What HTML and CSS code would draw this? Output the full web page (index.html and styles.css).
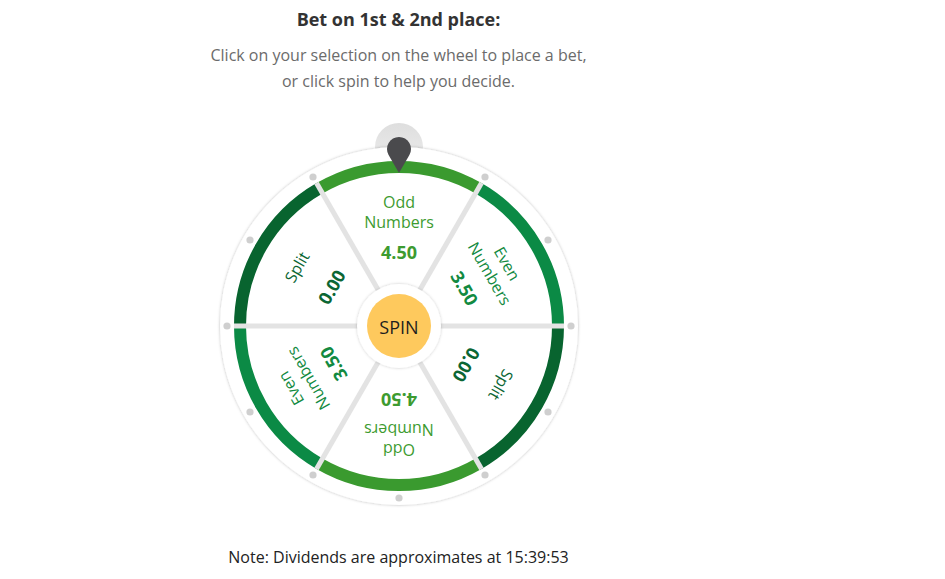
FILE: index.html
```html
<!DOCTYPE html>
<html lang="en">
<head>
<meta charset="utf-8">
<title>Bet on 1st &amp; 2nd place</title>
<link rel="stylesheet" href="styles.css">
</head>
<body>
<main class="page">
  <h1 class="title">Bet on 1st &amp; 2nd place:</h1>
  <p class="subtitle">Click on your selection on the wheel to place a bet,<br>or click spin to help you decide.</p>
  <svg class="wheel" width="380" height="400" viewBox="-190 -210 380 400" xmlns="http://www.w3.org/2000/svg">
    <defs>
      <filter id="rimShadow" x="-20%" y="-20%" width="140%" height="140%">
        <feDropShadow dx="0" dy="0" stdDeviation="1.8" flood-color="#000" flood-opacity="0.28"/>
      </filter>
      <filter id="hubShadow" x="-30%" y="-30%" width="160%" height="160%">
        <feDropShadow dx="0" dy="0" stdDeviation="1.5" flood-color="#000" flood-opacity="0.22"/>
      </filter>
      <linearGradient id="bumpGrad" x1="0" y1="0" x2="0" y2="1">
        <stop offset="0" stop-color="#dedede"/>
        <stop offset="1" stop-color="#efefef"/>
      </linearGradient>
    </defs>

    <circle class="bump" cx="0" cy="-179" r="24"/>
    <circle class="rim" cx="0" cy="0" r="179" filter="url(#rimShadow)"/>

    <path class="arc arc-odd" d="M -79.5 -137.7 A 159 159 0 0 1 79.5 -137.7"/>
    <path class="arc arc-even" d="M 79.5 -137.7 A 159 159 0 0 1 159 0"/>
    <path class="arc arc-split" d="M 159 0 A 159 159 0 0 1 79.5 137.7"/>
    <path class="arc arc-odd" d="M 79.5 137.7 A 159 159 0 0 1 -79.5 137.7"/>
    <path class="arc arc-even" d="M -79.5 137.7 A 159 159 0 0 1 -159 0"/>
    <path class="arc arc-split" d="M -159 0 A 159 159 0 0 1 -79.5 -137.7"/>

    <line class="divider" x1="82.5" y1="-142.9" x2="-82.5" y2="142.9"/>
    <line class="divider" x1="165" y1="0" x2="-165" y2="0"/>
    <line class="divider" x1="82.5" y1="142.9" x2="-82.5" y2="-142.9"/>

    <g class="dots">
      <circle cx="86" cy="-149" r="3.6"/>
      <circle cx="149" cy="-86" r="3.6"/>
      <circle cx="172" cy="0" r="3.6"/>
      <circle cx="149" cy="86" r="3.6"/>
      <circle cx="86" cy="149" r="3.6"/>
      <circle cx="0" cy="172" r="3.6"/>
      <circle cx="-86" cy="149" r="3.6"/>
      <circle cx="-149" cy="86" r="3.6"/>
      <circle cx="-172" cy="0" r="3.6"/>
      <circle cx="-149" cy="-86" r="3.6"/>
      <circle cx="-86" cy="-149" r="3.6"/>
    </g>

    <g class="seg seg-odd">
      <text class="label" x="0" y="-124">Odd</text>
      <text class="label" x="0" y="-104">Numbers</text>
      <text class="value" x="0" y="-74">4.50</text>
    </g>
    <g class="seg seg-even" transform="rotate(60)">
      <text class="label" x="0" y="-125">Even</text>
      <text class="label" x="0" y="-105">Numbers</text>
      <text class="value" x="0" y="-76">3.50</text>
    </g>
    <g class="seg seg-split" transform="rotate(120)">
      <text class="label" x="0" y="-118">Split</text>
      <text class="value" x="0" y="-78">0.00</text>
    </g>
    <g class="seg seg-odd" transform="rotate(180)">
      <text class="label" x="0" y="-124">Odd</text>
      <text class="label" x="0" y="-104">Numbers</text>
      <text class="value" x="0" y="-74">4.50</text>
    </g>
    <g class="seg seg-even" transform="rotate(240)">
      <text class="label" x="0" y="-125">Even</text>
      <text class="label" x="0" y="-105">Numbers</text>
      <text class="value" x="0" y="-76">3.50</text>
    </g>
    <g class="seg seg-split" transform="rotate(300)">
      <text class="label" x="0" y="-118">Split</text>
      <text class="value" x="0" y="-78">0.00</text>
    </g>

    <circle class="hub" cx="0" cy="0" r="42" filter="url(#hubShadow)"/>
    <circle class="spin" cx="0" cy="0" r="32"/>
    <text class="spin-text" x="0" y="1">SPIN</text>

    <path class="pin" d="M 0 -153 L -10.4 -171 A 12 12 0 1 1 10.4 -171 Z"/>
  </svg>
  <p class="note">Note: Dividends are approximates at 15:39:53</p>
</main>
</body>
</html>
```

FILE: styles.css
```css
html, body {
  margin: 0;
  padding: 0;
  background: #ffffff;
}

body {
  font-family: "Open Sans", "Noto Sans", "Liberation Sans", sans-serif;
}

.page {
  width: 797px;
  display: flex;
  flex-direction: column;
  align-items: center;
  text-align: center;
}

.title {
  margin: 8px 0 0;
  font-size: 18px;
  line-height: 22px;
  font-weight: 700;
  color: #333333;
}

.subtitle {
  margin: 12px 0 0;
  font-size: 16px;
  line-height: 26px;
  color: #6b6b6b;
}

.wheel {
  display: block;
  margin-top: 22px;
  width: 380px;
  height: 400px;
  overflow: visible;
}

.bump {
  fill: url(#bumpGrad);
}

.rim {
  fill: #ffffff;
}

.arc {
  fill: none;
  stroke-width: 12;
}

.arc-odd { stroke: #3a9a2f; }
.arc-even { stroke: #0b8a45; }
.arc-split { stroke: #08642f; }

.divider {
  stroke: #e3e3e3;
  stroke-width: 5;
}

.dots circle {
  fill: #cfcfcf;
}

.seg text {
  font-family: "Open Sans", "Noto Sans", sans-serif;
  text-anchor: middle;
  dominant-baseline: central;
}

.label {
  font-size: 16px;
}

.value {
  font-size: 18px;
  font-weight: 700;
}

.seg-odd { fill: #3d9b30; }
.seg-even { fill: #128a41; }
.seg-split { fill: #0b6634; }

.hub {
  fill: #ffffff;
}

.spin {
  fill: #fec95d;
}

.spin-text {
  font-family: "Open Sans", "Noto Sans", sans-serif;
  font-size: 18px;
  fill: #1e1e1e;
  text-anchor: middle;
  dominant-baseline: central;
}

.pin {
  fill: #4a4a4d;
}

.note {
  margin: 30px 0 0;
  font-size: 16px;
  line-height: 22px;
  color: #222222;
}
```
